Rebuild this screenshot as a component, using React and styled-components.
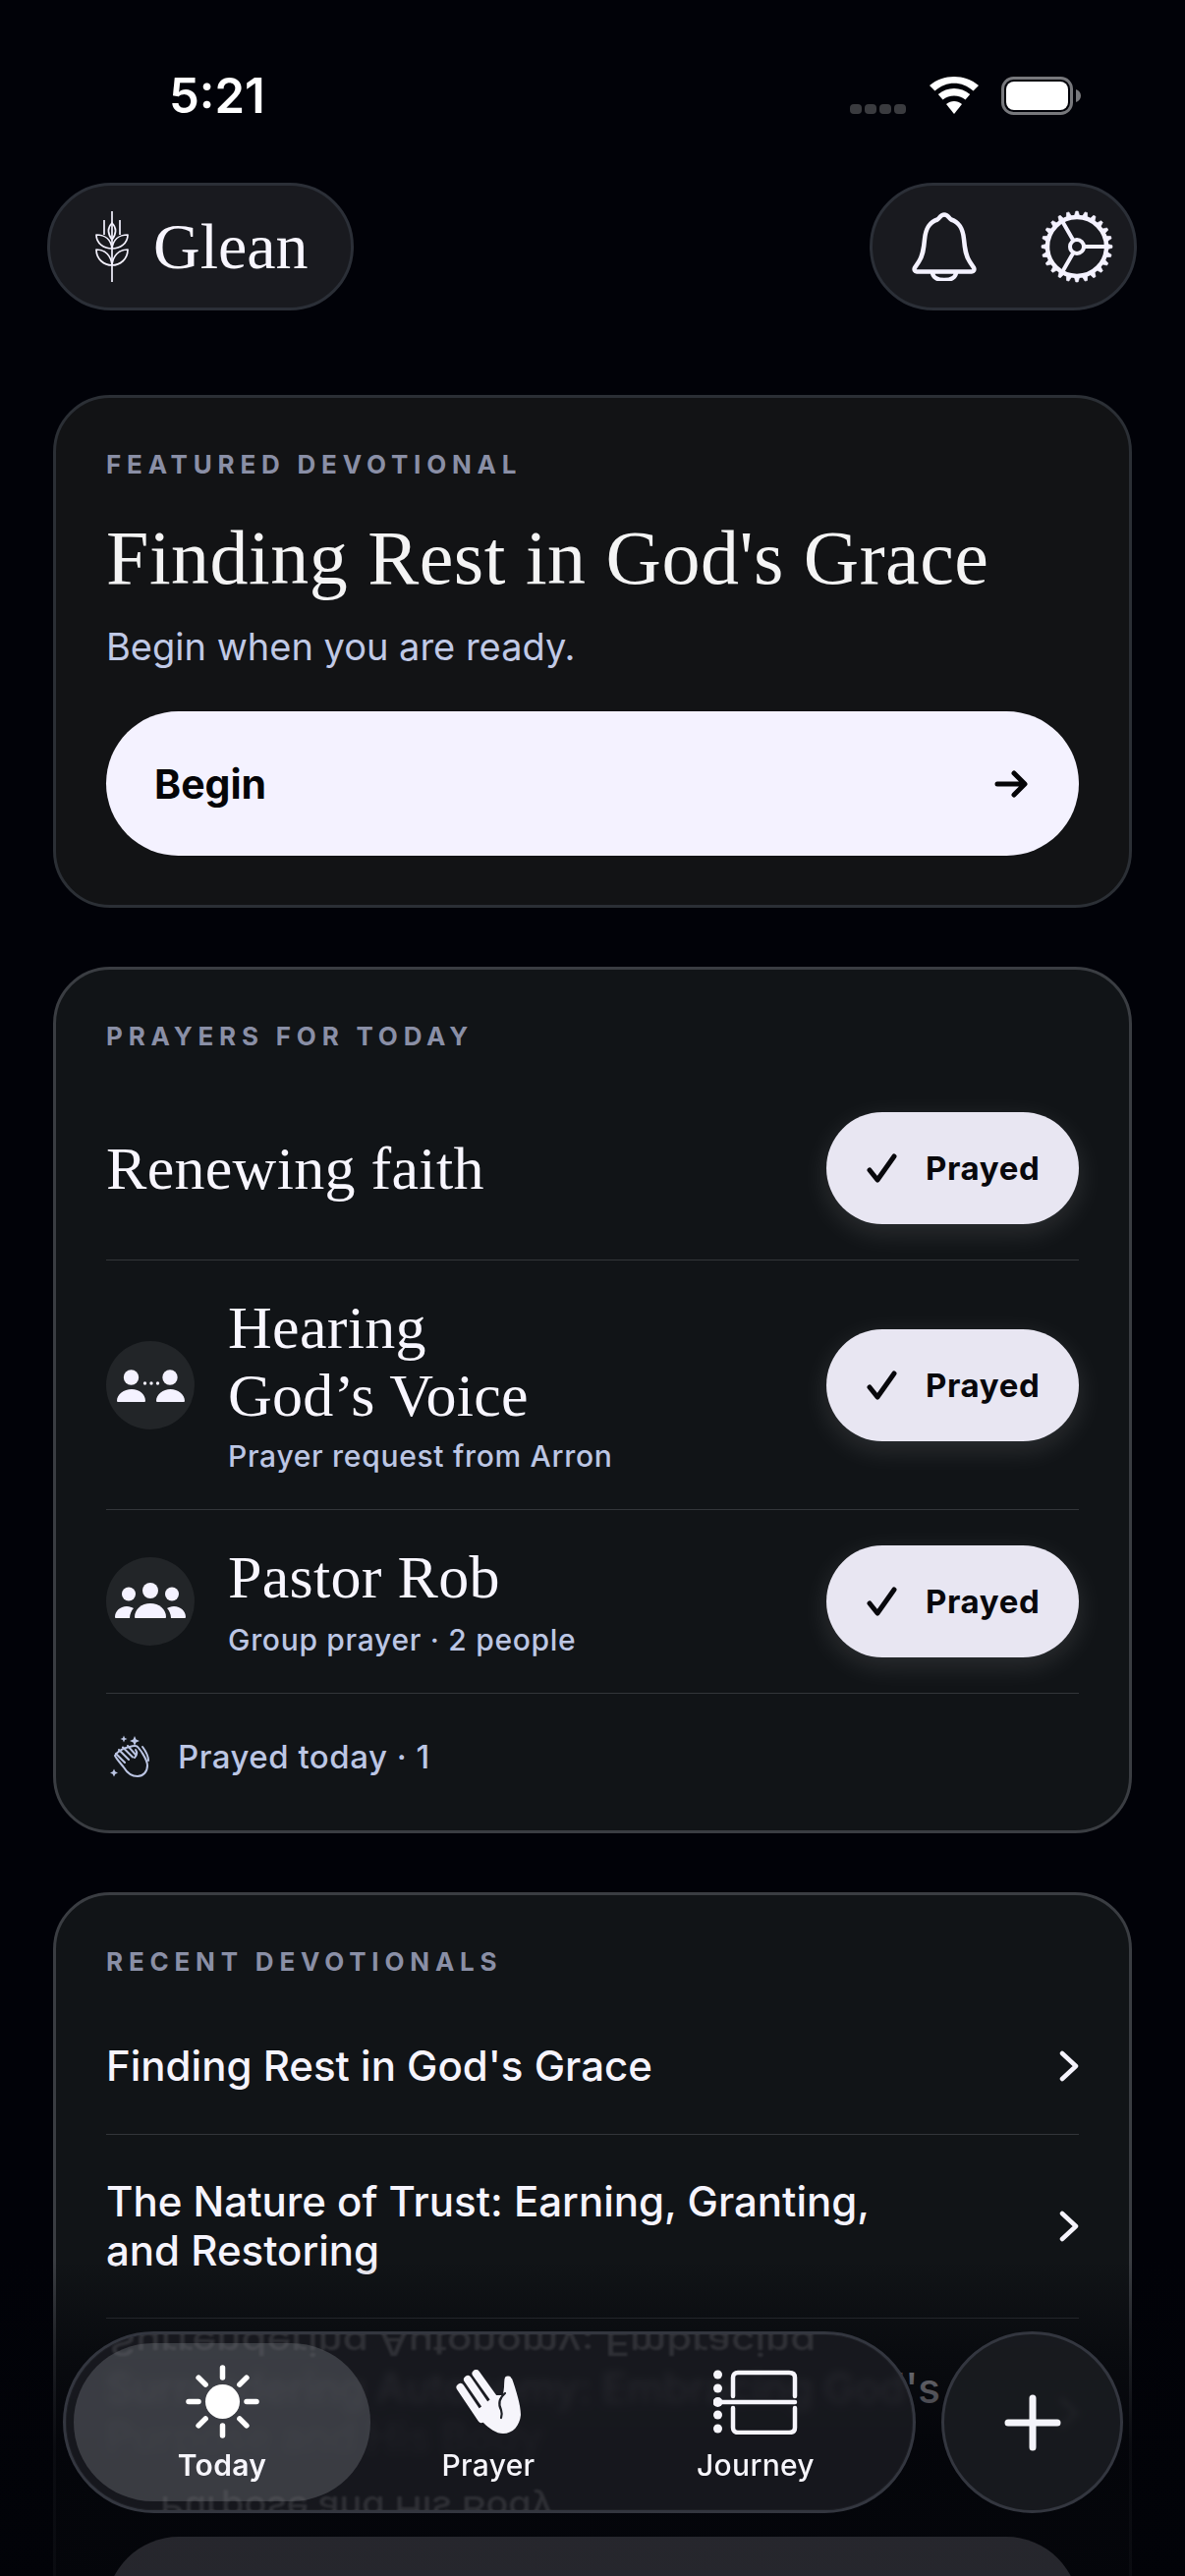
import React from "react";
import styled, { createGlobalStyle } from "styled-components";

const Global = createGlobalStyle`
  html, body { margin: 0; padding: 0; background: #010208; }
  #root { width: 1206px; }
  * { box-sizing: border-box; }
`;

const SANS = `Inter, "Liberation Sans", sans-serif`;
const SERIF = `"Liberation Serif", "Times New Roman", serif`;

const Screen = styled.div`
  position: relative;
  width: 1206px;
  height: 2622px;
  overflow: hidden;
  background: #010208;
  font-family: ${SANS};
  color: #f4f2ff;
`;

const StatusBar = styled.div`
  height: 186px;
  display: flex;
  align-items: flex-start;
  justify-content: space-between;
  padding: 66px 106px 0 172px;
`;
const Time = styled.div`
  font-size: 49px;
  line-height: 64px;
  font-weight: 600;
  color: #fff;
`;
const StatusIcons = styled.div`
  display: flex;
  align-items: flex-start;
  padding-top: 12px;
  gap: 23px;
`;

const Header = styled.header`
  height: 130px;
  padding: 0 49px 0 48px;
  display: flex;
  justify-content: space-between;
`;
const GlassPill = styled.div`
  height: 130px;
  border-radius: 65px;
  background: #191a1f;
  border: 3px solid #2b2f37;
  display: flex;
  align-items: center;
`;
const BrandPill = styled(GlassPill)`
  width: 312px;
  padding-left: 46px;
  gap: 25px;
`;
const ActionPill = styled(GlassPill)`
  width: 272px;
  padding-left: 40px;
  gap: 65px;
`;
const Brand = styled.span`
  font-family: ${SERIF};
  font-size: 66px;
  line-height: 80px;
  color: #f8f6ff;
`;

const Main = styled.main`
  padding: 86px 54px 0;
  display: flex;
  flex-direction: column;
  gap: 60px;
`;
const Card = styled.section`
  border-radius: 58px;
  padding: 52px 51px ${(p) => p.$pb || 0}px;
  background: ${(p) => p.$bg || "#111417"};
  border: 3px solid ${(p) => p.$line || "#3a3d42"};
`;
const Eyebrow = styled.div`
  font-size: 26px;
  line-height: 32px;
  font-weight: 700;
  letter-spacing: 5.8px;
  color: #8a8fa6;
`;
const FeatureTitle = styled.h1`
  margin: 37px 0 0;
  font-family: ${SERIF};
  font-weight: 400;
  font-size: 78px;
  line-height: 84px;
  letter-spacing: 0.5px;
  color: #f4f4f4;
  white-space: nowrap;
`;
const FeatureSub = styled.p`
  margin: 24px 0 0;
  font-size: 38px;
  line-height: 48px;
  font-weight: 400;
  color: #c0c9e6;
`;
const BeginButton = styled.div`
  margin-top: 42px;
  height: 147px;
  border-radius: 74px;
  background: #f4f2ff;
  padding: 0 52px 0 49px;
  display: flex;
  align-items: center;
  justify-content: space-between;
  font-size: 41px;
  font-weight: 700;
  color: #050507;
`;

const PrayerRow = styled.div`
  display: flex;
  align-items: center;
  justify-content: space-between;
  padding: ${(p) => p.$py}px 0;
  margin-top: ${(p) => p.$mt || 0}px;
  border-bottom: 1.5px solid #33363a;
`;
const PrayerLead = styled.div`
  display: flex;
  align-items: center;
  gap: 34px;
`;
const Avatar = styled.div`
  width: 90px;
  height: 90px;
  border-radius: 50%;
  background: #222528;
  flex: none;
`;
const PrayerName = styled.div`
  font-family: ${SERIF};
  font-size: 62px;
  line-height: 69px;
  letter-spacing: 0.3px;
  color: #f8f6ff;
`;
const PrayerMeta = styled.div`
  margin-top: ${(p) => p.$mt}px;
  font-size: 30px;
  line-height: 40px;
  font-weight: 500;
  letter-spacing: 0.7px;
  color: #bcc6e4;
`;
const PrayedButton = styled.div`
  width: 257px;
  height: 114px;
  flex: none;
  border-radius: 57px;
  background: #e8e6f2;
  box-shadow: 0 8px 28px rgba(255, 255, 255, 0.12);
  display: flex;
  align-items: center;
  padding-left: 41px;
  gap: 28px;
  font-size: 33px;
  font-weight: 700;
  letter-spacing: 0.6px;
  color: #08080c;
`;
const PrayedFooter = styled.div`
  display: flex;
  align-items: center;
  gap: 29px;
  padding: 0 0 12px 4px;
  height: 139px;
  font-size: 33px;
  line-height: 40px;
  font-weight: 500;
  letter-spacing: 0.5px;
  color: #bcc6e4;
`;

const RecentRow = styled.div`
  display: flex;
  align-items: center;
  justify-content: space-between;
  padding: ${(p) => p.$py}px 0;
  margin-top: ${(p) => p.$mt || 0}px;
  border-bottom: ${(p) => (p.$last ? "none" : "1.5px solid #33363a")};
`;
const RecentTitle = styled.div`
  font-size: 42px;
  line-height: 50px;
  font-weight: 500;
  white-space: nowrap;
  color: #f6f4fd;
`;
const NextButton = styled.div`
  margin-top: 30px;
  height: 170px;
  border-radius: 74px;
  background: #f4f2ff;
`;

const Fade = styled.div`
  position: absolute;
  left: 0;
  right: 0;
  top: 2300px;
  bottom: 0;
  pointer-events: none;
  background: linear-gradient(
    to bottom,
    rgba(2, 3, 8, 0) 0,
    rgba(2, 3, 8, 0.55) 100px,
    rgba(2, 3, 8, 0.85) 190px,
    rgba(2, 3, 8, 0.85) 100%
  );
`;

const Nav = styled.nav`
  position: absolute;
  left: 64px;
  top: 2373px;
  width: 868px;
  height: 185px;
  border-radius: 93px;
  overflow: hidden;
  padding: 9px 8px;
  display: grid;
  grid-template-columns: 302px 240px 1fr;
  background: rgba(26, 28, 33, 0.84);
  backdrop-filter: blur(4px);
  border: 3px solid #33363f;
  box-shadow: inset 0 0 0 1px rgba(255, 255, 255, 0.03);
`;
const LensText = styled.div`
  position: absolute;
  left: ${(p) => p.$x}px;
  top: ${(p) => p.$y}px;
  transform: scale(${(p) => p.$sx || 1}, -0.8);
  transform-origin: left center;
  font-size: 42px;
  line-height: 50px;
  font-weight: 500;
  white-space: nowrap;
  color: rgba(255, 255, 255, 0.11);
  filter: blur(1px);
`;
const Tab = styled.div`
  position: relative;
  border-radius: 81px;
  background: ${(p) => (p.$active ? "rgba(110, 112, 118, 0.42)" : "transparent")};
  display: flex;
  flex-direction: column;
  align-items: center;
  padding-top: 22px;
`;
const TabIcon = styled.div`
  height: 75px;
  display: flex;
  align-items: center;
  justify-content: center;
`;
const TabLabel = styled.div`
  margin-top: 8px;
  font-size: 30px;
  line-height: 38px;
  font-weight: ${(p) => (p.$active ? 600 : 500)};
  letter-spacing: 0.3px;
  color: #f6f5fb;
`;
const Fab = styled.div`
  position: absolute;
  left: 958px;
  top: 2373px;
  width: 185px;
  height: 185px;
  border-radius: 50%;
  background: rgba(26, 28, 33, 0.88);
  backdrop-filter: blur(3px);
  border: 3px solid #33363f;
  display: flex;
  align-items: center;
  justify-content: center;
`;

const Signal = () => (
  <svg width="58" height="38" viewBox="0 0 58 38">
    {[0, 15, 30, 45].map((x) => (
      <rect key={x} x={x} y="28" width="12" height="10" rx="4" fill="#3a3b3f" />
    ))}
  </svg>
);
const Wifi = () => (
  <svg width="50" height="38" viewBox="0 0 50 38">
    <path d="M25 38 17 28c4.600-4 11.400-4 16 0z" fill="#fff" />
    <path d="M13.500 23.500 8.800 18c9-8 23.400-8 32.400 0l-4.700 5.500c-6.500-5.500-16.500-5.500-23 0z" fill="#fff" />
    <path d="M5.500 14.500 0 9c14-12 36-12 50 0l-5.500 5.500C33 4 17 4 5.500 14.500z" fill="#fff" />
  </svg>
);
const Battery = () => (
  <svg width="81" height="39" viewBox="0 0 81 39">
    <rect x="1.500" y="1.500" width="70" height="36" rx="11" fill="none" stroke="#77787c" strokeWidth="3" />
    <rect x="5" y="5" width="63" height="29" rx="8" fill="#fff" />
    <path d="M76 13c3 1 5 3.500 5 6.500S79 25 76 26z" fill="#77787c" />
  </svg>
);
const Wheat = () => (
  <svg width="34" height="72" viewBox="0 0 34 72" fill="none" stroke="#f4f2ff" strokeWidth="1.700" strokeLinejoin="round">
    <path d="M17 0v72" />
    <path d="M9 9v15M25 9v15" />
    <path d="M17 12c-4 4-5 10 0 17 5-7 4-13 0-17z" />
    <path d="M1 24c9 0 15 5 16 14-8 0-16-5-16-14zM33 24c-9 0-15 5-16 14 8 0 16-5 16-14z" />
    <path d="M1 39c9 0 15 6 16 16-8 0-16-6-16-16zM33 39c-9 0-15 6-16 16 8 0 16-6 16-16z" />
  </svg>
);
const Bell = () => (
  <svg width="66" height="70" viewBox="0 0 66 70" fill="none" stroke="#f4f2ff" strokeWidth="4.500" strokeLinejoin="round">
    <path d="M33 2.500c4 0 5 4 7 5 9 3 12 10 13 20 1 11 2 17 6 23l4 6c1 2 0 4-2 4H5c-2 0-3-2-2-4l4-6c4-6 5-12 6-23 1-10 4-17 13-20 2-1 3-5 7-5z" />
    <path d="M21 61c0 5 5 8 12 8s12-3 12-8" />
  </svg>
);
const Gear = () => {
  const teeth = Array.from({ length: 24 }, (_, i) => (i * 360) / 24);
  return (
    <svg width="74" height="74" viewBox="-37 -37 74 74" fill="none" stroke="#f4f2ff">
      {teeth.map((a) => (
        <path key={a} d="M-3 -30 L-1.200 -36 L1.200 -36 L3 -30 Z" fill="#f4f2ff" strokeWidth="0.600" transform={`rotate(${a})`} />
      ))}
      <circle r="30" strokeWidth="4.500" />
      <circle r="7" strokeWidth="4" />
      <path d="M7 0H30M-3.500 -6 -15 -26M-3.500 6 -15 26" strokeWidth="4" />
    </svg>
  );
};
const Arrow = () => (
  <svg width="34" height="28" viewBox="0 0 34 28" fill="none" stroke="#050507" strokeWidth="5" strokeLinecap="round" strokeLinejoin="round">
    <path d="M3 14h27M20 3l11 11-11 11" />
  </svg>
);
const Check = () => (
  <svg width="32" height="30" viewBox="0 0 32 30" fill="none" stroke="#08080c" strokeWidth="5" strokeLinecap="round" strokeLinejoin="round">
    <path d="M3 17l8 10L28 3" />
  </svg>
);
const Chevron = () => (
  <svg width="20" height="32" viewBox="0 0 20 32" fill="none" stroke="#f6f4fd" strokeWidth="4.500" strokeLinecap="round" strokeLinejoin="round">
    <path d="M3 3l14 13L3 29" />
  </svg>
);
const PairIcon = () => (
  <svg width="90" height="90" viewBox="0 0 90 90" fill="#f4f2ff">
    <circle cx="25.500" cy="37" r="7.700" />
    <circle cx="65" cy="37" r="7.700" />
    <path d="M11 61c0-7 7-12 15-12s14 5 14 12c0 0 0 1-1 1H12c-1 0-1-1-1-1zM51 61c0-7 7-12 14.500-12S80 54 80 61c0 0 0 1-1 1H52c-1 0-1-1-1-1z" />
    <circle cx="39.500" cy="43" r="1.700" />
    <circle cx="46" cy="43" r="1.700" />
    <circle cx="52.500" cy="43" r="1.700" />
  </svg>
);
const GroupIcon = () => (
  <svg width="90" height="90" viewBox="0 0 90 90" fill="#f4f2ff">
    <circle cx="23" cy="37.500" r="7" />
    <circle cx="45" cy="34" r="8" />
    <circle cx="67" cy="37.500" r="7" />
    <path d="M29 61c0-8 7-14 16-14s16 6 16 14c0 .500-.500 1-1 1H30c-.500 0-1-.500-1-1z" />
    <path d="M9 61c0-6 5-11 12-11 3 0 5 1 7 2-2 2-4 6-4 10H10c-.500 0-1-.500-1-1zM81 61c0-6-5-11-12-11-3 0-5 1-7 2 2 2 4 6 4 10h14c.500 0 1-.500 1-1z" />
  </svg>
);
const Clap = () => (
  <svg width="40" height="44" viewBox="0 0 40 44" fill="none" stroke="#bcc6e4" strokeWidth="2" strokeLinecap="round" strokeLinejoin="round">
    <path d="M14 0.500l1 2.500 2.500 1-2.500 1-1 2.500-1-2.500-2.500-1 2.500-1z" fill="#bcc6e4" stroke="none" />
    <path d="M25 1l1.500 3.500 3.500 1.500-3.500 1.500L25 11l-1.500-3.500L20 6l3.500-1.500z" fill="#bcc6e4" stroke="none" />
    <path d="M4 34.500l1.300 2.700 2.700 1.300-2.700 1.300L4 42.500l-1.300-2.700L0 38.500l2.700-1.300z" fill="#bcc6e4" stroke="none" />
    <path d="M5 21c2 4 6 8 9 12 3 5 8 9 14 9 6 0 10-5 10-11 0-5-3-9-6-14l-4-5c-2-2-5-1-8 0-5 1-12 4-15 9z" />
    <path d="M6 19l9 9M9 15l10 10M13 12.500l10 10M18 11l8 9M26 15c2 3 1 6-1 8" />
    <path d="M33 12c3 4 6 9 6 14" />
  </svg>
);
const Sun = () => {
  const rays = [0, 45, 90, 135, 180, 225, 270, 315];
  return (
    <svg width="75" height="75" viewBox="-37.500 -37.500 75 75">
      <circle r="17.500" fill="#fff" />
      {rays.map((a) => (
        <path key={a} d="M0 -34.500V-24.500" stroke="#fff" strokeWidth="5.500" strokeLinecap="round" transform={`rotate(${a})`} />
      ))}
    </svg>
  );
};
const Hand = () => (
  <svg width="66" height="66" viewBox="0 0 66 66">
    <g stroke="#f6f5fb" strokeWidth="8" strokeLinecap="round" fill="none">
      <path d="M4.500 18 26 50M12 10 34 42M20.500 4 42 34" />
      <path d="M53 10 52 32" strokeWidth="7" />
    </g>
    <path d="M18 44 40 26 48 26 50 9 57 9C61 20 66 36 66 46 65 57 58 65 48 65 41 65 34 60 28 54z" fill="#f6f5fb" />
    <path d="M50 24C44 29 43 35 46 41 47 44 47 46 46 49" fill="none" stroke="#1e2026" strokeWidth="2.200" strokeLinecap="round" />
  </svg>
);
const Journey = () => (
  <svg width="86" height="66" viewBox="0 0 86 66" fill="none" stroke="#f6f5fb" strokeWidth="4.500" strokeLinecap="round">
    <path d="M20 27V8c0-3 2-5 5-5h52c4 0 6 2 6 5v19" />
    <path d="M20 39v20c0 3 2 5 5 5h52c4 0 6-2 6-5V39" />
    <path d="M5 33h78" />
    <g fill="#f6f5fb" stroke="none">
      <circle cx="4.500" cy="5" r="4.500" />
      <circle cx="4.500" cy="19" r="4.500" />
      <circle cx="4.500" cy="33" r="5" />
      <circle cx="4.500" cy="46" r="4.500" />
      <circle cx="4.500" cy="60" r="4.500" />
    </g>
  </svg>
);
const Plus = () => (
  <svg width="58" height="58" viewBox="0 0 58 58" fill="none" stroke="#f4f4fa" strokeWidth="7" strokeLinecap="round">
    <path d="M29 4v50M4 29h50" />
  </svg>
);

const PrayedPill = () => (
  <PrayedButton>
    <Check />
    Prayed
  </PrayedButton>
);

export default function App() {
  return (
    <Screen>
      <Global />
      <StatusBar>
        <Time>5:21</Time>
        <StatusIcons>
          <Signal />
          <Wifi />
          <Battery />
        </StatusIcons>
      </StatusBar>
      <Header>
        <BrandPill>
          <Wheat />
          <Brand>Glean</Brand>
        </BrandPill>
        <ActionPill>
          <Bell />
          <Gear />
        </ActionPill>
      </Header>
      <Main>
        <Card $bg="#121315" $line="#2b2f35" $pb={50}>
          <Eyebrow>FEATURED DEVOTIONAL</Eyebrow>
          <FeatureTitle>Finding Rest in God's Grace</FeatureTitle>
          <FeatureSub>Begin when you are ready.</FeatureSub>
          <BeginButton>
            Begin
            <Arrow />
          </BeginButton>
        </Card>
        <Card>
          <Eyebrow>PRAYERS FOR TODAY</Eyebrow>
          <PrayerRow $py={36} $mt={25}>
            <PrayerName>Renewing faith</PrayerName>
            <PrayedPill />
          </PrayerRow>
          <PrayerRow $py={34}>
            <PrayerLead>
              <Avatar>
                <PairIcon />
              </Avatar>
              <div>
                <PrayerName>
                  Hearing
                  <br />
                  God’s Voice
                </PrayerName>
                <PrayerMeta $mt={7}>Prayer request from Arron</PrayerMeta>
              </div>
            </PrayerLead>
            <PrayedPill />
          </PrayerRow>
          <PrayerRow $py={34}>
            <PrayerLead>
              <Avatar>
                <GroupIcon />
              </Avatar>
              <div>
                <PrayerName>Pastor Rob</PrayerName>
                <PrayerMeta $mt={9}>Group prayer · 2 people</PrayerMeta>
              </div>
            </PrayerLead>
            <PrayedPill />
          </PrayerRow>
          <PrayedFooter>
            <Clap />
            Prayed today · 1
          </PrayedFooter>
        </Card>
        <Card>
          <Eyebrow>RECENT DEVOTIONALS</Eyebrow>
          <RecentRow $py={44} $mt={21}>
            <RecentTitle>Finding Rest in God's Grace</RecentTitle>
            <Chevron />
          </RecentRow>
          <RecentRow $py={43}>
            <RecentTitle>
              The Nature of Trust: Earning, Granting,
              <br />
              and Restoring
            </RecentTitle>
            <Chevron />
          </RecentRow>
          <RecentRow $py={46} $last>
            <RecentTitle>
              Surrendering Autonomy: Embracing God's
              <br />
              Purpose and His Body
            </RecentTitle>
            <Chevron />
          </RecentRow>
          <NextButton />
        </Card>
      </Main>
      <Fade />
      <Nav>
        <LensText $x={44} $y={-16}>Surrendering Autonomy: Embracing</LensText>
        <LensText $x={96} $y={152} $sx={0.9}>Purpose and His Body</LensText>
        <Tab $active>
          <TabIcon>
            <Sun />
          </TabIcon>
          <TabLabel $active>Today</TabLabel>
        </Tab>
        <Tab>
          <TabIcon>
            <Hand />
          </TabIcon>
          <TabLabel>Prayer</TabLabel>
        </Tab>
        <Tab>
          <TabIcon>
            <Journey />
          </TabIcon>
          <TabLabel>Journey</TabLabel>
        </Tab>
      </Nav>
      <Fab>
        <Plus />
      </Fab>
    </Screen>
  );
}
